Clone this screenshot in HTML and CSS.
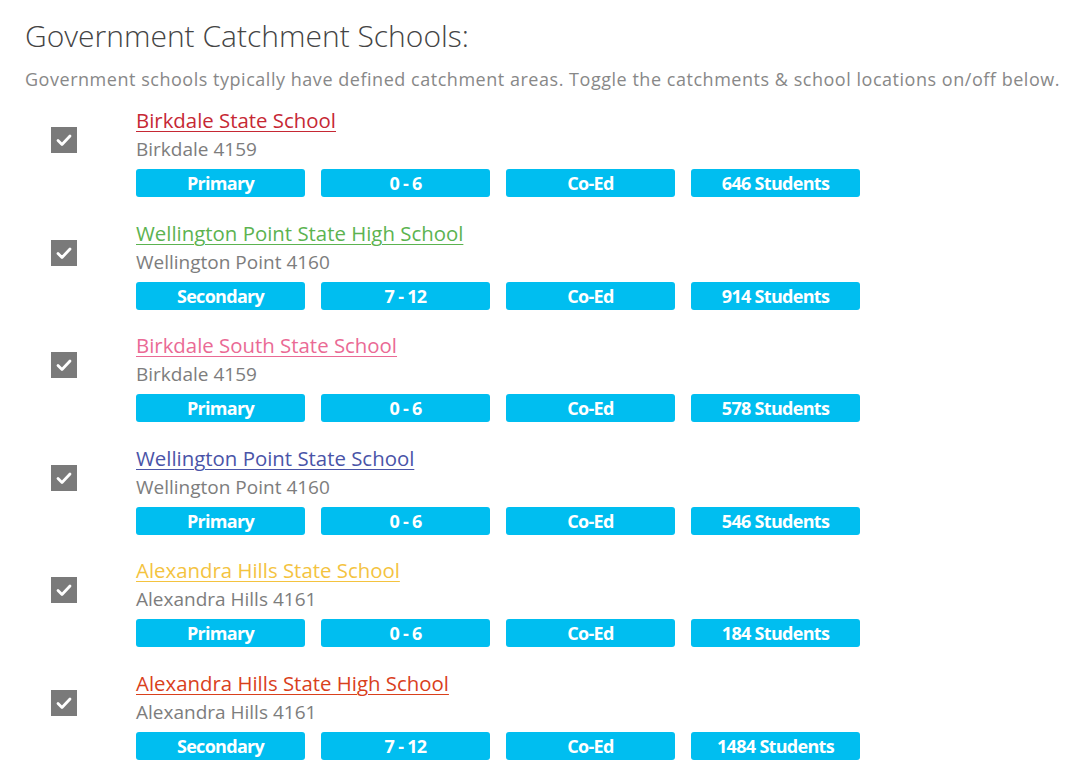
FILE: index.html
```html
<!DOCTYPE html>
<html>
<head>
<meta charset="utf-8">
<link rel="stylesheet" href="styles.css">
</head>
<body>
<div class="page">
  <h1 class="title">Government Catchment Schools:</h1>
  <p class="intro">Government schools typically have defined catchment areas. Toggle the catchments &amp; school locations on/off below.</p>
  <ul class="schools">
    <li class="school">
      <span class="check"><svg viewBox="0 0 26 26" width="26" height="26"><path d="M7 13.5l4 4 8-8.5" fill="none" stroke="#fff" stroke-width="2.8" stroke-linecap="round" stroke-linejoin="round"/></svg></span>
      <div class="info">
        <a href="#" class="name c-red">Birkdale State School</a>
        <div class="addr">Birkdale 4159</div>
        <div class="badges"><span class="badge">Primary</span><span class="badge">0 - 6</span><span class="badge">Co-Ed</span><span class="badge">646 Students</span></div>
      </div>
    </li>
    <li class="school">
      <span class="check"><svg viewBox="0 0 26 26" width="26" height="26"><path d="M7 13.5l4 4 8-8.5" fill="none" stroke="#fff" stroke-width="2.8" stroke-linecap="round" stroke-linejoin="round"/></svg></span>
      <div class="info">
        <a href="#" class="name c-green">Wellington Point State High School</a>
        <div class="addr">Wellington Point 4160</div>
        <div class="badges"><span class="badge">Secondary</span><span class="badge">7 - 12</span><span class="badge">Co-Ed</span><span class="badge">914 Students</span></div>
      </div>
    </li>
    <li class="school">
      <span class="check"><svg viewBox="0 0 26 26" width="26" height="26"><path d="M7 13.5l4 4 8-8.5" fill="none" stroke="#fff" stroke-width="2.8" stroke-linecap="round" stroke-linejoin="round"/></svg></span>
      <div class="info">
        <a href="#" class="name c-pink">Birkdale South State School</a>
        <div class="addr">Birkdale 4159</div>
        <div class="badges"><span class="badge">Primary</span><span class="badge">0 - 6</span><span class="badge">Co-Ed</span><span class="badge">578 Students</span></div>
      </div>
    </li>
    <li class="school">
      <span class="check"><svg viewBox="0 0 26 26" width="26" height="26"><path d="M7 13.5l4 4 8-8.5" fill="none" stroke="#fff" stroke-width="2.8" stroke-linecap="round" stroke-linejoin="round"/></svg></span>
      <div class="info">
        <a href="#" class="name c-indigo">Wellington Point State School</a>
        <div class="addr">Wellington Point 4160</div>
        <div class="badges"><span class="badge">Primary</span><span class="badge">0 - 6</span><span class="badge">Co-Ed</span><span class="badge">546 Students</span></div>
      </div>
    </li>
    <li class="school">
      <span class="check"><svg viewBox="0 0 26 26" width="26" height="26"><path d="M7 13.5l4 4 8-8.5" fill="none" stroke="#fff" stroke-width="2.8" stroke-linecap="round" stroke-linejoin="round"/></svg></span>
      <div class="info">
        <a href="#" class="name c-yellow">Alexandra Hills State School</a>
        <div class="addr">Alexandra Hills 4161</div>
        <div class="badges"><span class="badge">Primary</span><span class="badge">0 - 6</span><span class="badge">Co-Ed</span><span class="badge">184 Students</span></div>
      </div>
    </li>
    <li class="school">
      <span class="check"><svg viewBox="0 0 26 26" width="26" height="26"><path d="M7 13.5l4 4 8-8.5" fill="none" stroke="#fff" stroke-width="2.8" stroke-linecap="round" stroke-linejoin="round"/></svg></span>
      <div class="info">
        <a href="#" class="name c-orange">Alexandra Hills State High School</a>
        <div class="addr">Alexandra Hills 4161</div>
        <div class="badges"><span class="badge">Secondary</span><span class="badge">7 - 12</span><span class="badge">Co-Ed</span><span class="badge">1484 Students</span></div>
      </div>
    </li>
  </ul>
</div>
</body>
</html>
```
FILE: styles.css
```css
html, body {
  margin: 0;
  padding: 0;
  background: #fff;
}
body {
  font-family: "Open Sans", "DejaVu Sans", sans-serif;
  color: #444;
}
.page {
  padding: 16px 0 0 25px;
}
.title {
  margin: 0;
  font-size: 30px;
  font-weight: 300;
  line-height: 40px;
  color: #444;
}
.intro {
  margin: 10px 0 0 0;
  font-size: 18px;
  letter-spacing: 0.53px;
  line-height: 26px;
  color: #888;
  white-space: nowrap;
}
.schools {
  list-style: none;
  margin: 14px 0 0 0;
  padding: 0;
}
.school {
  display: flex;
  align-items: flex-start;
  padding-left: 26px;
  height: 112.6px;
}
.check {
  width: 26px;
  height: 26px;
  background: #7a7a7a;
  margin-top: 21px;
  margin-right: 59px;
  display: block;
}
.check svg { display: block; }
.info {
  display: flex;
  flex-direction: column;
}
.name {
  font-size: 20.4px;
  line-height: 28px;
  text-decoration: underline;
  text-underline-offset: 3px;
  text-decoration-thickness: 1px;
  align-self: flex-start;
}
.c-red { color: #c62834; }
.c-green { color: #5cb350; }
.c-pink { color: #ea6a95; }
.c-indigo { color: #4a54a8; }
.c-yellow { color: #f4c33f; }
.c-orange { color: #d9401c; }
.addr {
  margin-top: 2px;
  font-size: 19px;
  line-height: 26px;
  color: #7d7d7d;
}
.badges {
  display: flex;
  gap: 16px;
  margin-top: 7px;
}
.badge {
  width: 169px;
  height: 28px;
  border-radius: 3px;
  background: #00bef0;
  color: #fff;
  font-weight: 700;
  font-size: 18px;
  letter-spacing: -0.7px;
  line-height: 28px;
  text-align: center;
}
```
